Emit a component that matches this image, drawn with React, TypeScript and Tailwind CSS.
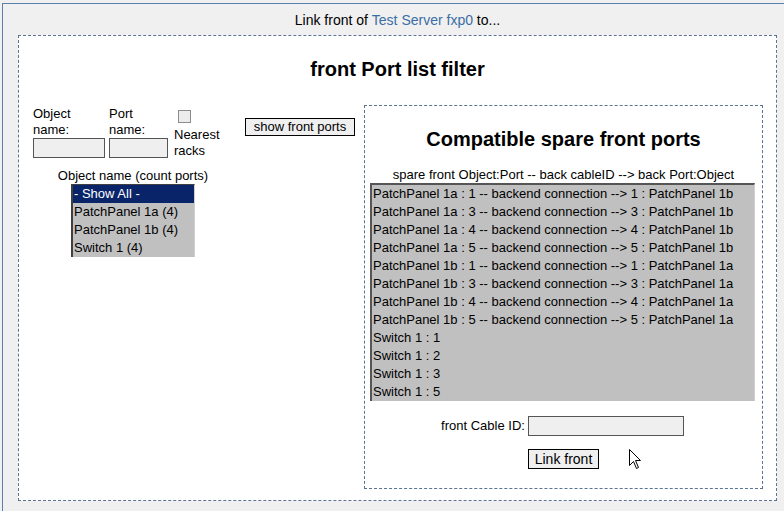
import React from "react";

const spareRows = [
  "PatchPanel 1a : 1 -- backend connection --> 1 : PatchPanel 1b",
  "PatchPanel 1a : 3 -- backend connection --> 3 : PatchPanel 1b",
  "PatchPanel 1a : 4 -- backend connection --> 4 : PatchPanel 1b",
  "PatchPanel 1a : 5 -- backend connection --> 5 : PatchPanel 1b",
  "PatchPanel 1b : 1 -- backend connection --> 1 : PatchPanel 1a",
  "PatchPanel 1b : 3 -- backend connection --> 3 : PatchPanel 1a",
  "PatchPanel 1b : 4 -- backend connection --> 4 : PatchPanel 1a",
  "PatchPanel 1b : 5 -- backend connection --> 5 : PatchPanel 1a",
  "Switch 1 : 1",
  "Switch 1 : 2",
  "Switch 1 : 3",
  "Switch 1 : 5",
];

const objectRows = ["- Show All -", "PatchPanel 1a (4)", "PatchPanel 1b (4)", "Switch 1 (4)"];

const App = () => {
  return (
    <div className="relative h-[511px] w-[784px] overflow-hidden bg-[#f0f0f0] pl-[2px] pt-[3px] font-['Liberation_Sans',Arial,sans-serif] text-[13px] leading-[16px] text-black">
      <div className="h-[520px] w-[800px] border-l border-t border-[#5a80ad] pl-[15px]">
        {/* page title */}
        <div className="flex h-[31px] w-[759px] items-center justify-center text-[14px]">
          Link front of&nbsp;<span className="text-[#3a6ea5]">Test Server fxp0</span>&nbsp;to...
        </div>

        <div className="h-[466px] w-[759px] border border-dashed border-[#5b7491] bg-white">
          <h2 className="mt-[22px] text-center text-[20px] font-bold leading-[22px]">front Port list filter</h2>

          <div className="mt-[25px] flex">
            {/* filter column */}
            <div className="w-[345px]">
              <div className="flex items-start pl-[14px]">
                <div className="mt-[1px] w-[76px]">
                  <div className="leading-[16px]">
                    Object
                    <br />
                    name:
                  </div>
                  <input className="block h-[20px] w-[72px] border border-[#555] bg-[#efefef]" />
                </div>
                <div className="mt-[1px] w-[65px]">
                  <div className="leading-[16px]">
                    Port
                    <br />
                    name:
                  </div>
                  <input className="block h-[20px] w-[59px] border border-[#555] bg-[#efefef]" />
                </div>
                <div className="w-[71px]">
                  <div className="ml-[4px] mt-[5px] h-[13px] w-[13px] border border-[#8c8c8c] bg-[#ececec]" />
                  <div className="mt-[4px] leading-[16px]">
                    Nearest
                    <br />
                    racks
                  </div>
                </div>
                <button className="mt-[13px] h-[18px] w-[110px] border border-black bg-[#efefef] text-[13px] leading-[16px]">
                  show front ports
                </button>
              </div>

              <div className="ml-[14px] mt-[9px] w-[200px] text-center">
                <div className="leading-[16px]">Object name (count ports)</div>
                <div className="mx-auto w-[124px] border-l-2 border-t border-[#404040] border-b-[#d4d0c8] border-r border-r-[#d4d0c8] bg-[#c0c0c0] text-left">
                  {objectRows.map((r, i) => (
                    <div
                      key={r}
                      className={
                        i === 0
                          ? "h-[18px] bg-[#0a246a] pl-[1px] leading-[18px] text-white"
                          : "h-[18px] pl-[1px] leading-[18px]"
                      }
                    >
                      {r}
                    </div>
                  ))}
                </div>
              </div>
            </div>

            {/* spare ports */}
            <div className="h-[384px] w-[399px] border border-dashed border-[#5b7491]">
              <h2 className="mt-[22px] text-center text-[20px] font-bold leading-[22px]">Compatible spare front ports</h2>
              <div className="mt-[17px] text-center leading-[16px]">
                spare front Object:Port -- back cableID --&gt; back Port:Object
              </div>
              <div className="ml-[5px] h-[218px] w-[385px] border-l-2 border-t-2 border-[#555] border-b-[#d4d0c8] border-r border-r-[#d4d0c8] bg-[#c0c0c0]">
                {spareRows.map((r) => (
                  <div key={r} className="h-[18px] pl-[1px] leading-[18px]">
                    {r}
                  </div>
                ))}
              </div>
              <div className="mt-[15px] flex items-center justify-center gap-[3px] pr-[2px]">
                <span>front Cable ID:</span>
                <input className="h-[20px] w-[156px] border border-[#555] bg-[#efefef]" />
              </div>
              <div className="mt-[13px] flex justify-center">
                <button className="h-[20px] w-[71px] border border-black bg-[#efefef] text-[14px] leading-[18px]">
                  Link front
                </button>
              </div>
            </div>
          </div>
        </div>
      </div>

      {/* mouse pointer */}
      <svg className="absolute left-[629px] top-[449px]" width="13" height="21" viewBox="0 0 13 21">
        <path d="M0.5 0.5 L0.5 16.5 L4.5 12.5 L7.5 19.5 L9.5 18.5 L6.5 11.5 L11.5 11.5 Z" fill="#fff" stroke="#000" strokeWidth="1" />
      </svg>
    </div>
  );
};

export default App;
